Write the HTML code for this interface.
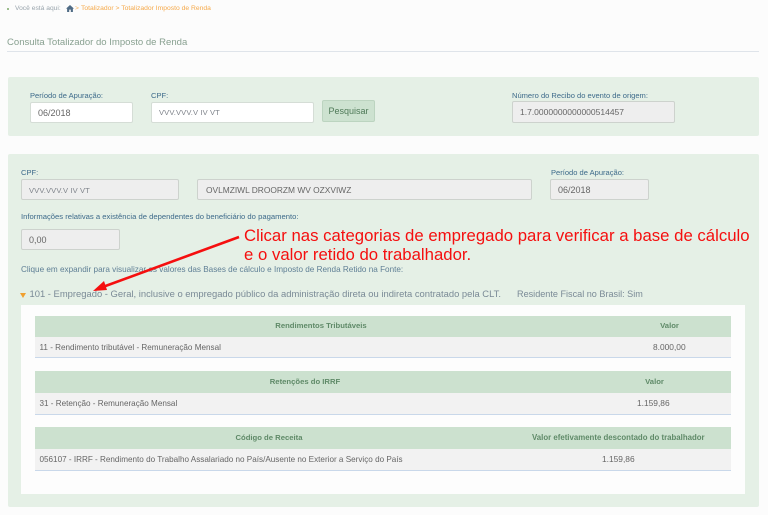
<!DOCTYPE html>
<html lang="pt-BR">
<head>
<meta charset="utf-8">
<title>Consulta Totalizador do Imposto de Renda</title>
<style>
html,body{margin:0;padding:0;width:768px;height:515px;overflow:hidden;background:#fcfcfc}
body{position:relative;font-family:"Liberation Sans",sans-serif}
#r{position:absolute;left:0;top:0;width:768px;height:515px;filter:blur(.3px)}
.a{position:absolute;white-space:nowrap}
.t{line-height:12px}
.lbl{font-size:7.55px;color:#3d6a8a}
.p{position:absolute;background:#e5f0e6;border-radius:2px}
.i{position:absolute;box-sizing:border-box;border:1px solid #d5ddd6;border-radius:2px;font-size:9px;color:#666;padding-left:7px;display:flex;align-items:center;white-space:nowrap}
.w{background:#fff}
.g{background:#eeeeee;border-color:#cdd2cd}
.m{font-size:7.6px;color:#80858c;letter-spacing:.1px}
.th{position:absolute;left:35px;width:696px;height:21px;background:#cce1cf}
.tr{position:absolute;left:35px;width:696px;height:21px;background:#f2f2f2;border-bottom:1px solid #c9d8ea;box-sizing:border-box}
.h{font-size:7.7px;font-weight:bold;color:#5f8a68;text-align:center;line-height:12px}
.c{font-size:8.15px;color:#666;line-height:12px}
</style>
</head>
<body>
<div id="r">
<div class="a" style="left:7px;top:8px;width:2px;height:2px;background:#9bbd8c"></div>
<div class="a t" style="left:15px;top:3px;font-size:6.7px;color:#9aa5ad">Você está aqui:</div>
<svg class="a" style="left:66px;top:5px" width="8" height="7" viewBox="0 0 8 7"><path d="M4 0 0 3.6h1.1V7h2.1V4.6h1.6V7h2.1V3.6H8z" fill="#4f6b85"/></svg>
<div class="a t" style="left:75px;top:3px;font-size:6.7px;color:#f5b35f">&gt;</div>
<div class="a t" style="left:81px;top:3px;font-size:6.75px;color:#f5a94a">Totalizador &gt; Totalizador Imposto de Renda</div>

<div class="a t" style="left:7px;top:36px;font-size:9.55px;line-height:13px;color:#88a090">Consulta Totalizador do Imposto de Renda</div>
<div class="a" style="left:7px;top:51px;width:752px;height:1px;background:#dfe4ea"></div>

<div class="p" style="left:8px;top:77px;width:751px;height:59px"></div>
<div class="a t lbl" style="left:30px;top:90px">Período de Apuração:</div>
<div class="i w" style="left:30px;top:102px;width:103px;height:21px">06/2018</div>
<div class="a t lbl" style="left:151px;top:90px">CPF:</div>
<div class="i w m" style="left:151px;top:102px;width:163px;height:21px">VVV.VVV.V IV VT</div>
<div class="i" style="left:322px;top:100px;width:53px;height:22px;background:#cde2d0;border-color:#bcd4c0;color:#4f7a58;padding:0;justify-content:center;font-size:9px">Pesquisar</div>
<div class="a t lbl" style="left:512px;top:90px">Número do Recibo do evento de origem:</div>
<div class="i g" style="left:512px;top:101px;width:163px;height:22px;font-size:8.5px">1.7.0000000000000514457</div>

<div class="p" style="left:8px;top:154px;width:751px;height:353px"></div>
<div class="a t lbl" style="left:21px;top:167px">CPF:</div>
<div class="i g m" style="left:21px;top:179px;width:158px;height:21px;padding-top:1px">VVV.VVV.V IV VT</div>
<div class="i g" style="left:197px;top:179px;width:335px;height:21px;font-size:8.4px;padding-left:8px">OVLMZIWL DROORZM WV OZXVIWZ</div>
<div class="a t lbl" style="left:551px;top:167px">Período de Apuração:</div>
<div class="i g" style="left:550px;top:179px;width:99px;height:21px">06/2018</div>
<div class="a t lbl" style="left:21px;top:211px;font-size:7.67px">Informações relativas a existência de dependentes do beneficiário do pagamento:</div>
<div class="i g" style="left:21px;top:229px;width:99px;height:21px">0,00</div>
<div class="a t lbl" style="left:21px;top:264px;font-size:8.17px;color:#5f7f95">Clique em expandir para visualizar os valores das Bases de cálculo e Imposto de Renda Retido na Fonte:</div>

<svg class="a" style="left:20px;top:293px" width="6" height="5" viewBox="0 0 6 5"><path d="M0 0h6L3 5z" fill="#f0a030"/></svg>
<div class="a t" style="left:29.5px;top:287px;font-size:9.42px;line-height:13px;color:#7a8a96">101 - Empregado - Geral, inclusive o empregado público da administração direta ou indireta contratado pela CLT.</div>
<div class="a t" style="left:517px;top:288px;font-size:9.1px;line-height:13px;color:#7a8a96">Residente Fiscal no Brasil: Sim</div>

<div class="a" style="left:21px;top:305px;width:724px;height:189px;background:#fdfdfd"></div>

<div class="th" style="top:316px"></div>
<div class="a h" style="left:35px;top:320px;width:572px">Rendimentos Tributáveis</div>
<div class="a h" style="left:607px;top:320px;width:125px">Valor</div>
<div class="tr" style="top:337px"></div>
<div class="a c" style="left:39.5px;top:342px">11 - Rendimento tributável - Remuneração Mensal</div>
<div class="a c" style="left:653px;top:341px;font-size:8.4px">8.000,00</div>

<div class="th" style="top:371px;height:22px"></div>
<div class="a h" style="left:35px;top:376px;width:540px">Retenções do IRRF</div>
<div class="a h" style="left:592px;top:376px;width:125px">Valor</div>
<div class="tr" style="top:393px;height:22px"></div>
<div class="a c" style="left:39.5px;top:398px">31 - Retenção - Remuneração Mensal</div>
<div class="a c" style="left:637px;top:397px;font-size:8.4px">1.159,86</div>

<div class="th" style="top:427px;height:22px"></div>
<div class="a h" style="left:35px;top:432px;width:468px">Código de Receita</div>
<div class="a h" style="left:532px;top:432px;font-size:7.85px">Valor efetivamente descontado do trabalhador</div>
<div class="tr" style="top:449px;height:22px"></div>
<div class="a c" style="left:39.5px;top:454px">056107 - IRRF - Rendimento do Trabalho Assalariado no País/Ausente no Exterior a Serviço do País</div>
<div class="a c" style="left:602px;top:453px;font-size:8.4px">1.159,86</div>

<svg class="a" style="left:0;top:0" width="768" height="515" viewBox="0 0 768 515">
<path d="M239 237 100 288" stroke="#f50f0f" stroke-width="2.6" fill="none"/>
<path d="M93 291 104 281 107 290z" fill="#f50f0f"/>
</svg>
<div class="a" style="left:244px;top:226px;font-size:16.75px;line-height:19px;color:#f50f0f">Clicar nas categorias de empregado para verificar a base de cálculo<br>e o valor retido do trabalhador.</div>
</div>
</body>
</html>
